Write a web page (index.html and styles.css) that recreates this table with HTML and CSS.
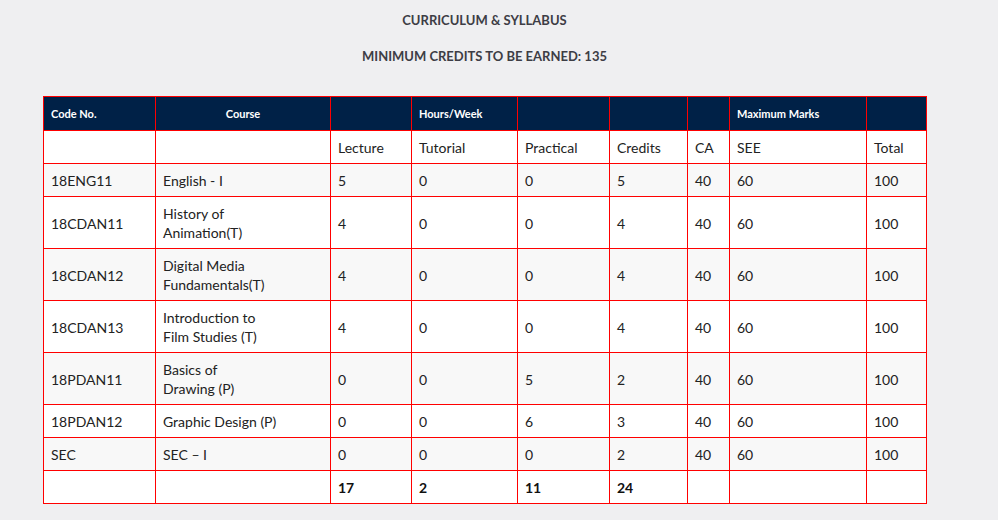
FILE: index.html
```html
<!DOCTYPE html>
<html>
<head>
<meta charset="utf-8">
<link rel="stylesheet" href="styles.css">
</head>
<body>
<div class="wrap">
  <h4 class="title">CURRICULUM &amp; SYLLABUS</h4>
  <h4 class="subtitle">MINIMUM CREDITS TO BE EARNED: 135</h4>
  <table class="syllabus">
    <colgroup>
      <col class="c1"><col class="c2"><col class="c3"><col class="c4"><col class="c5"><col class="c6"><col class="c7"><col class="c8"><col class="c9">
    </colgroup>
    <thead>
      <tr>
        <th>Code No.</th>
        <th class="center">Course</th>
        <th></th>
        <th>Hours/Week</th>
        <th></th>
        <th></th>
        <th></th>
        <th>Maximum Marks</th>
        <th></th>
      </tr>
    </thead>
    <tbody>
      <tr><td></td><td></td><td>Lecture</td><td>Tutorial</td><td>Practical</td><td>Credits</td><td>CA</td><td>SEE</td><td>Total</td></tr>
      <tr><td>18ENG11</td><td>English - I</td><td>5</td><td>0</td><td>0</td><td>5</td><td>40</td><td>60</td><td>100</td></tr>
      <tr><td>18CDAN11</td><td>History of<br>Animation(T)</td><td>4</td><td>0</td><td>0</td><td>4</td><td>40</td><td>60</td><td>100</td></tr>
      <tr><td>18CDAN12</td><td>Digital Media<br>Fundamentals(T)</td><td>4</td><td>0</td><td>0</td><td>4</td><td>40</td><td>60</td><td>100</td></tr>
      <tr><td>18CDAN13</td><td>Introduction to<br>Film Studies (T)</td><td>4</td><td>0</td><td>0</td><td>4</td><td>40</td><td>60</td><td>100</td></tr>
      <tr><td>18PDAN11</td><td>Basics of<br>Drawing (P)</td><td>0</td><td>0</td><td>5</td><td>2</td><td>40</td><td>60</td><td>100</td></tr>
      <tr><td>18PDAN12</td><td>Graphic Design (P)</td><td>0</td><td>0</td><td>6</td><td>3</td><td>40</td><td>60</td><td>100</td></tr>
      <tr><td>SEC</td><td>SEC – I</td><td>0</td><td>0</td><td>0</td><td>2</td><td>40</td><td>60</td><td>100</td></tr>
      <tr class="totals"><td></td><td></td><td>17</td><td>2</td><td>11</td><td>24</td><td></td><td></td><td></td></tr>
    </tbody>
  </table>
</div>
</body>
</html>
```

FILE: styles.css
```css
html, body {
  margin: 0;
  padding: 0;
  background: #efeff1;
}
body {
  font-family: "Lato", "Noto Sans", sans-serif;
  color: #333;
}
.wrap {
  width: 883px;
  margin-left: 43px;
  padding-top: 11px;
}
.title, .subtitle {
  margin: 0;
  text-align: center;
  font-size: 13px;
  font-weight: 700;
  line-height: 18px;
  color: #3d3d45;
}
.subtitle {
  margin-top: 18px;
}
.syllabus {
  margin-top: 31px;
  width: 883px;
  border-collapse: collapse;
  table-layout: fixed;
  font-size: 14px;
}
.c1 { width: 112px; }
.c2 { width: 175px; }
.c3 { width: 81px; }
.c4 { width: 106px; }
.c5 { width: 92px; }
.c6 { width: 78px; }
.c7 { width: 42px; }
.c8 { width: 137px; }
.c9 { width: 60px; }
.syllabus th,
.syllabus td {
  border: 1px solid #f00;
  text-align: left;
  vertical-align: middle;
  line-height: 19px;
}
.syllabus th {
  padding: 7px 7px;
  background: #002147;
  color: #fff;
  font-size: 11px;
  font-weight: 700;
}
.syllabus th.center {
  text-align: center;
}
.syllabus td {
  padding: 7px 7px 6px;
  background: #fff;
  color: #222;
}
.syllabus tbody tr:nth-child(even) td {
  background: #f8f8f8;
}
.syllabus .totals td {
  font-weight: 700;
  color: #111;
}
```
